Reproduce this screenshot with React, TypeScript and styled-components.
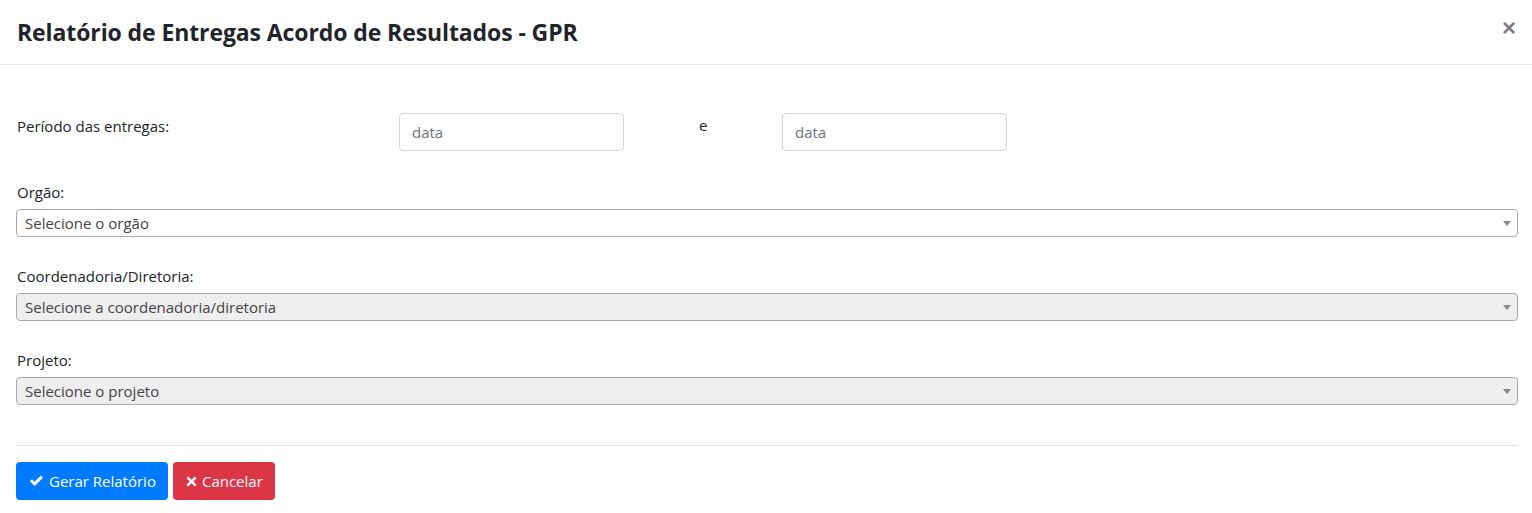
import React from "react";
import styled, { createGlobalStyle } from "styled-components";

const Global = createGlobalStyle`
  html, body { margin: 0; padding: 0; background: #fff; }
  body { font-family: "Open Sans", "Noto Sans", sans-serif; color: #212529; }
  * { box-sizing: border-box; }
`;

const Modal = styled.div`
  width: 1532px;
  height: 513px;
  background: #fff;
  display: flex;
  flex-direction: column;
`;

const Header = styled.div`
  height: 65px;
  border-bottom: 1px solid #e9ecef;
  display: flex;
  align-items: center;
  justify-content: space-between;
  padding: 0 16px 0 17px;
`;

const Title = styled.h4`
  margin: 0;
  font-size: 23px;
  font-weight: 700;
  color: #212529;
  letter-spacing: -0.1px;
`;

const Close = styled.button`
  border: none;
  background: none;
  padding: 0;
  margin-top: -8px;
  font-size: 24px;
  font-weight: 700;
  color: #000;
  opacity: 0.5;
  line-height: 1;
  font-family: "Liberation Sans", sans-serif;
`;

const Body = styled.div`
  padding: 48px 14px 0 16px;
  display: flex;
  flex-direction: column;
`;

const PeriodRow = styled.div`
  display: grid;
  grid-template-columns: 383px 300px 83px 225px;
  align-items: start;
  margin-bottom: 30px;
`;

const Label = styled.label`
  display: block;
  font-size: 15px;
  line-height: 22px;
  color: #212529;
  padding-left: 1px;
`;

const PeriodLabel = styled(Label)`
  padding-top: 2px;
`;

const SepText = styled.span`
  font-size: 15px;
  line-height: 22px;
  padding-top: 1px;
`;

const Input = styled.input`
  width: 225px;
  height: 38px;
  border: 1px solid #ced4da;
  border-radius: 4px;
  padding: 0 12px;
  font-family: inherit;
  font-size: 15px;
  color: #495057;
  &::placeholder { color: #6c757d; }
`;

const Field = styled.div`
  display: flex;
  flex-direction: column;
  gap: 6px;
  margin-bottom: 28px;
  &:last-child { margin-bottom: 0; }
`;

const Select = styled.div<{ $disabled?: boolean }>`
  height: 28px;
  border: 1px solid #aaa;
  border-radius: 4px;
  background: ${(p) => (p.$disabled ? "#eee" : "#fff")};
  display: flex;
  align-items: center;
  justify-content: space-between;
  padding: 0 6px 0 8px;
  font-size: 15px;
  color: #444;
`;

const Arrow = styled.span`
  width: 0;
  height: 0;
  border-left: 4px solid transparent;
  border-right: 4px solid transparent;
  border-top: 5px solid #888;
`;

const Divider = styled.hr`
  margin: 40px 14px 16px 16px;
  border: none;
  border-top: 1px solid #e5e5e5;
`;

const Footer = styled.div`
  display: flex;
  gap: 5px;
  padding-left: 16px;
`;

const Button = styled.button<{ $variant: "primary" | "danger" }>`
  height: 38px;
  border: none;
  border-radius: 4px;
  padding: 0 12px 0 13px;
  font-family: inherit;
  font-size: 15px;
  color: #fff;
  display: flex;
  align-items: center;
  gap: 5px;
  background: ${(p) => (p.$variant === "primary" ? "#007bff" : "#dc3545")};
`;

const Check = () => (
  <svg width="15" height="12" viewBox="0 0 15 12">
    <path d="M0.8 6.3 L2.9 4.2 L5.6 6.8 L11.9 0.6 L14 2.7 L5.6 11 Z" fill="#fff" />
  </svg>
);

const Times = () => (
  <svg width="11" height="11" viewBox="0 0 11 11">
    <path
      d="M2.2 0.4 L5.5 3.7 L8.8 0.4 L10.6 2.2 L7.3 5.5 L10.6 8.8 L8.8 10.6 L5.5 7.3 L2.2 10.6 L0.4 8.8 L3.7 5.5 L0.4 2.2 Z"
      fill="#fff"
    />
  </svg>
);

export default function App() {
  return (
    <>
      <Global />
      <Modal>
        <Header>
          <Title>Relatório de Entregas Acordo de Resultados - GPR</Title>
          <Close aria-label="Fechar">×</Close>
        </Header>
        <Body>
          <PeriodRow>
            <PeriodLabel>Período das entregas:</PeriodLabel>
            <Input placeholder="data" />
            <SepText>e</SepText>
            <Input placeholder="data" />
          </PeriodRow>
          <Field>
            <Label>Orgão:</Label>
            <Select>
              Selecione o orgão
              <Arrow />
            </Select>
          </Field>
          <Field>
            <Label>Coordenadoria/Diretoria:</Label>
            <Select $disabled>
              Selecione a coordenadoria/diretoria
              <Arrow />
            </Select>
          </Field>
          <Field>
            <Label>Projeto:</Label>
            <Select $disabled>
              Selecione o projeto
              <Arrow />
            </Select>
          </Field>
        </Body>
        <Divider />
        <Footer>
          <Button $variant="primary">
            <Check />
            Gerar Relatório
          </Button>
          <Button $variant="danger">
            <Times />
            Cancelar
          </Button>
        </Footer>
      </Modal>
    </>
  );
}
